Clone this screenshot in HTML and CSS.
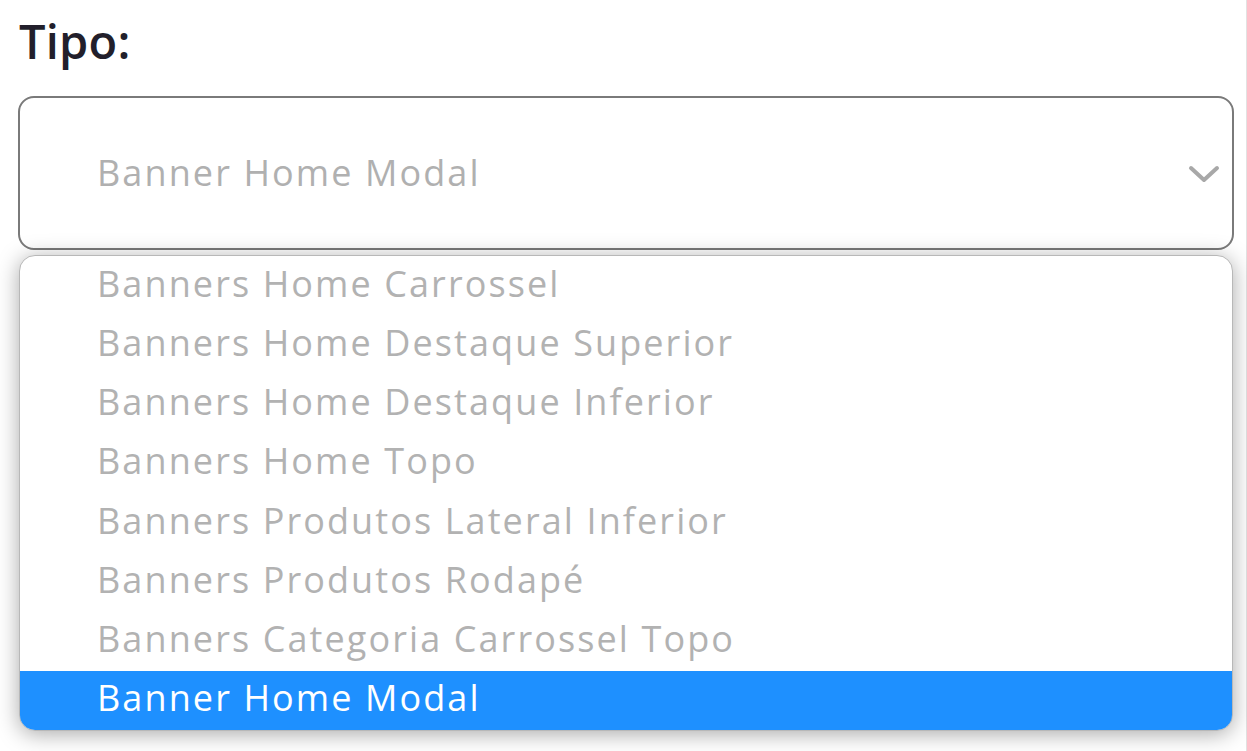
FILE: index.html
```html
<!DOCTYPE html>
<html lang="pt-BR">
<head>
<meta charset="utf-8">
<title>Tipo</title>
<link rel="stylesheet" href="styles.css">
</head>
<body>
<div class="page">
  <div class="field">
    <label class="field-label">Tipo:</label>
    <div class="select-wrap">
      <div class="select-box">
        <span class="select-value">Banner Home Modal</span>
        <svg class="chevron" width="32" height="20" viewBox="0 0 32 20" aria-hidden="true">
          <path d="M3 4 L16 16 L29 4" fill="none" stroke="#a8a8a8" stroke-width="4" stroke-linecap="round" stroke-linejoin="round"/>
        </svg>
      </div>
      <ul class="options">
        <li class="option">Banners Home Carrossel</li>
        <li class="option">Banners Home Destaque Superior</li>
        <li class="option">Banners Home Destaque Inferior</li>
        <li class="option">Banners Home Topo</li>
        <li class="option">Banners Produtos Lateral Inferior</li>
        <li class="option">Banners Produtos Rodapé</li>
        <li class="option">Banners Categoria Carrossel Topo</li>
        <li class="option is-selected">Banner Home Modal</li>
      </ul>
    </div>
  </div>
</div>
</body>
</html>
```

FILE: styles.css
```css
html, body {
  margin: 0;
  padding: 0;
  background: #ffffff;
}

body {
  font-family: "Open Sans", "Liberation Sans", sans-serif;
  overflow: hidden;
}

.page {
  width: 1246px;
  height: 751px;
  border-right: 1px solid #e2e2e2;
  box-sizing: content-box;
}

.field {
  padding: 17px 0 0 18px;
  width: 1216px;
}

.field-label {
  display: block;
  font-size: 47px;
  line-height: 48px;
  font-weight: 600;
  color: #221f2b;
  letter-spacing: 0.2px;
  padding-left: 1px;
}

.select-wrap {
  position: relative;
  margin-top: 31px;
}

.select-box {
  height: 154px;
  box-sizing: border-box;
  border: 2px solid #7a7a7a;
  border-radius: 16px;
  background: #ffffff;
  display: flex;
  align-items: center;
  justify-content: space-between;
  padding: 0 12px 0 77px;
}

.select-value {
  font-size: 36px;
  font-weight: 500;
  letter-spacing: 2.1px;
  color: #b0b0b0;
  padding-bottom: 2px;
}

.chevron {
  display: block;
  margin-top: 2px;
}

.options {
  position: absolute;
  left: 1px;
  right: 1px;
  top: 159px;
  margin: 0;
  padding: 0;
  list-style: none;
  background: #ffffff;
  border: 1px solid #b8b8b8;
  border-radius: 16px;
  overflow: hidden;
  box-shadow: 0 3px 22px rgba(0, 0, 0, 0.34);
}

.option {
  height: 59.25px;
  box-sizing: border-box;
  display: flex;
  align-items: center;
  padding: 0 0 5px 77px;
  font-size: 36px;
  font-weight: 500;
  letter-spacing: 2.1px;
  color: #b2b2b2;
  white-space: nowrap;
}

.option.is-selected {
  background: #1e90ff;
  color: #ffffff;
}
```
